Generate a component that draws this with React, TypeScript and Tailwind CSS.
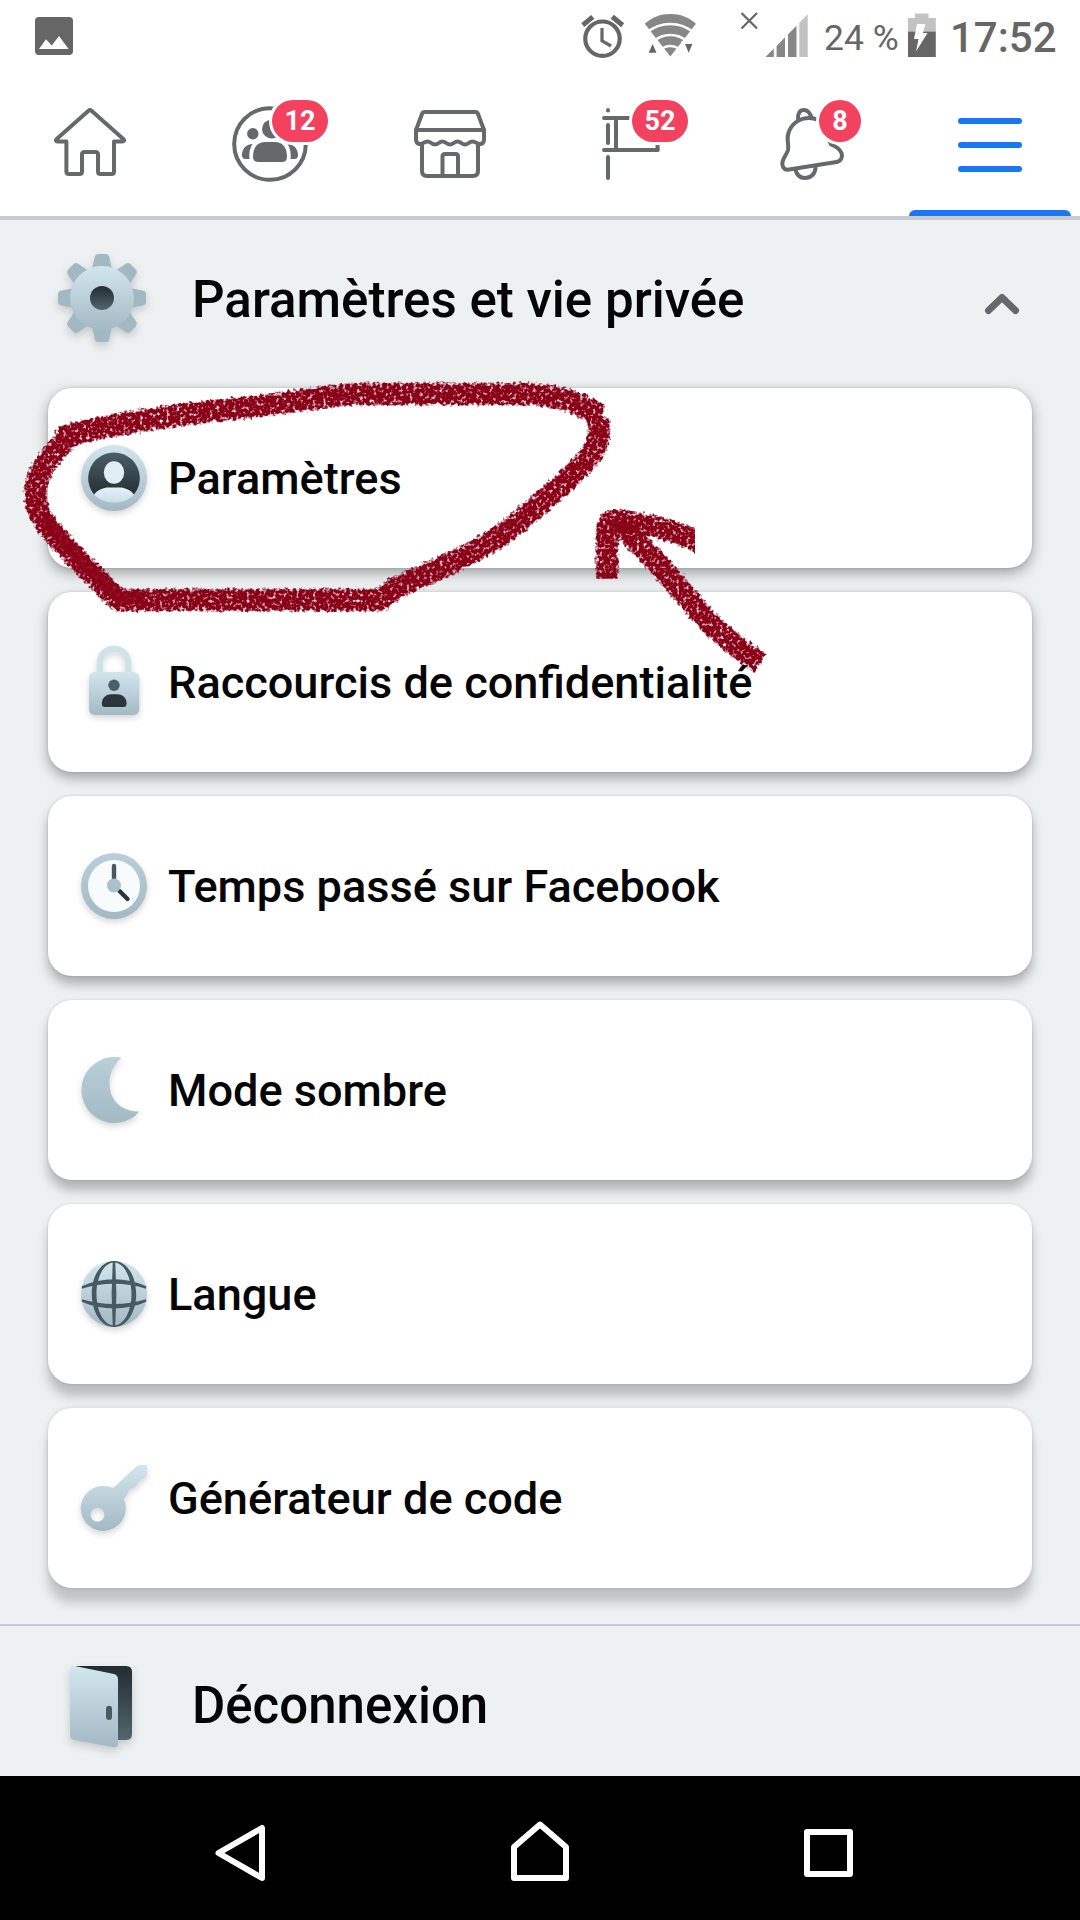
import type { ReactNode } from "react";
import { clsx } from "clsx";

interface NavTab {
    id: string;
    icon: ReactNode;
    badge?: string;
    badgeClass?: string;
    active?: boolean;
}

interface MenuItem {
    id: string;
    label: string;
    icon: ReactNode;
    shadow: string;
}

/* ---------- Status bar ---------- */

function StatusBar() {
    return (
        <div className="flex h-[72px] items-start bg-white text-[#666]">
            <svg className="ml-[35px] mt-[17px] h-[38px] w-[38px]" viewBox="0 0 38 38">
                <rect width="38" height="38" rx="4" fill="#666" />
                <path d="M4 32 11 22.3 16.8 28.6 24 19 33.6 32Z" fill="#fff" />
            </svg>

            {/* Alarm */}
            <svg className="ml-[508px] mt-3 h-12 w-[44px]" viewBox="581 12 44 48" fill="none" stroke="#666">
                <circle cx="602.5" cy="38.7" r="17.2" strokeWidth="4.2" />
                <path d="M602 28v12.8l9 5.2" strokeWidth="3.2" />
                <path d="M582.8 25.2 592.8 16.8M612.3 16.8 622.6 25.2" strokeWidth="5" />
            </svg>

            {/* Wifi */}
            <svg className="ml-[18px] mt-3 h-12 w-[56px]" viewBox="643 12 56 48">
                <path d="M670.3 56.5 644.8 23.7C652 17.2 660.5 14 670.3 14s18.5 3.2 25.7 9.7Z" fill="#878787" />
                <path
                    d="M647 32.6A36 36 0 0 1 693.6 32.6M654 41A25 25 0 0 1 686.6 41M661 49.5A14 14 0 0 1 679.6 49.5"
                    fill="none"
                    stroke="#fff"
                    strokeWidth="2.6"
                />
                <path d="M645 56 652.5 38.5 660 56ZM681 41H697L689 56Z" fill="#fff" />
                <path d="M648.7 52.7 652.6 44 656.5 52.7ZM685 44H692.4L688.7 52.7Z" fill="#666" />
            </svg>

            {/* Signal */}
            <svg className="ml-[41px] mt-3 h-12 w-[70px]" viewBox="740 12 70 48">
                <path d="M741.5 13 757 28.5M757 13 741.5 28.5" stroke="#666" strokeWidth="2.2" />
                <path d="M765.5 57 773.8 48.6V57ZM776.6 57V46L785 37.3V57ZM788 57V34.3L796.5 25.8V57Z" fill="#878787" />
                <path d="M799.3 57V22.8L807.7 14.3V57Z" fill="#c2c2c2" />
            </svg>

            <span className="ml-[14px] mt-[17px] w-[76px] whitespace-nowrap text-[35.5px] leading-[42px]">24 %</span>

            {/* Battery */}
            <svg className="ml-[8px] mt-3 h-12 w-[28px]" viewBox="908 12 28 48">
                <path d="M908 31.5V18h7v-4.5h13.5V18h7.3v13.5Z" fill="#c2c2c2" />
                <path d="M908 31.5h27.8V57H908Z" fill="#666" />
                <path d="M917 24h8.5l-2.5 9h4.5L916 51.5l2.5-12.5h-4.5Z" fill="#fff" />
            </svg>

            <span className="ml-[14px] mt-[13px] whitespace-nowrap text-[42px] font-medium leading-[50px]">17:52</span>
        </div>
    );
}

/* ---------- Tab bar ---------- */

const line = {
    fill: "none",
    stroke: "#65696c",
    strokeWidth: 4,
    strokeLinejoin: "round" as const,
    strokeLinecap: "round" as const,
};

const tabs: NavTab[] = [
    {
        id: "home",
        icon: (
            <svg className="h-[144px] w-[180px]" viewBox="0 72 180 144" {...line}>
                <path d="M88.5 110.8Q90 109.4 91.5 110.8L123.6 139.2Q125 141.3 122.6 141.5H114V171.5Q114 174 111.5 174H100.5Q98 174 98 171.5V154.5Q98 152 95.5 152H84.5Q82 152 82 154.5V171.5Q82 174 79.5 174H69Q66.4 174 66.4 171.5V141.5H57.6Q55 141.3 56.4 139.2Z" />
            </svg>
        ),
    },
    {
        id: "groups",
        badge: "12",
        badgeClass: "left-[92px] w-14",
        icon: (
            <svg className="h-[144px] w-[180px]" viewBox="180 72 180 144">
                <circle cx="270" cy="144" r="35.8" {...line} />
                <g fill="#65696c">
                    <circle cx="252.8" cy="133.8" r="5.7" />
                    <ellipse cx="272" cy="129" rx="10" ry="9.5" />
                    <path d="M253 156.5C253 147 258 142 265 142H275C282 142 287 147 287 156.5Q287 162 282 162H258Q253 162 253 156.5Z" />
                    <path d="M252.5 144C246 144 242 149 242 155Q242 159 245.5 159H249.5Q248.5 150 252.5 144Z" />
                    <path d="M287.5 144C294 144 298 149 298 155Q298 159 294.5 159H290.5Q291.5 150 287.5 144Z" />
                </g>
            </svg>
        ),
    },
    {
        id: "marketplace",
        icon: (
            <svg className="h-[144px] w-[180px]" viewBox="360 72 180 144" {...line}>
                <path d="M416 130 422 114Q422.6 112 424.8 112H475.2Q477.4 112 478 114L484 130Z" />
                <path d="M416 130V140Q416.5 144 420 144C424 144 424 141.5 427.5 141.5S431.5 144.5 435 144.5 439 141.5 442.5 141.5 446.5 144.5 450 144.5 454 141.5 457.5 141.5 461.5 144.5 465 144.5 469 141.5 472.5 141.5 476 144 480 144Q483.5 144 484 140V130" />
                <path d="M422 144V171Q422 176 427 176H473Q478 176 478 171V144M442.5 176V156.5Q442.5 154 445 154H455.5Q458 154 458 156.5V176" />
            </svg>
        ),
    },
    {
        id: "drafts",
        badge: "52",
        badgeClass: "left-[92px] w-14",
        icon: (
            <svg className="h-[144px] w-[180px]" viewBox="540 72 180 144" {...line}>
                <path d="M608 110V110.6M608 125V143M608 157V178M604 118H640M616 118V150M604 150H657.8L657 140" />
            </svg>
        ),
    },
    {
        id: "notifications",
        badge: "8",
        badgeClass: "left-[99px] w-[42px]",
        icon: (
            <svg className="h-[144px] w-[180px]" viewBox="720 72 180 144" {...line}>
                <path d="M798 119.5C797.5 113 800 110 804 110S810 113 811.5 117.5" />
                <path d="M818 120C809 115.5 797 118.5 791 127.5 784.5 137 789.5 144 788 150 786.5 155 782 159 782.3 164Q783 170.5 789 169.6L836.5 162C841 161.2 843 157 841.5 153 839.5 148.5 835 146 831 144.5L826 132" />
                <path d="M795.5 170C797 175.5 800.5 178 805 178 811 178 815.5 173.5 815.5 167.5" />
            </svg>
        ),
    },
    {
        id: "menu",
        active: true,
        icon: (
            <svg className="h-[144px] w-[180px]" viewBox="900 72 180 144" stroke="#1778f2" strokeWidth="6" strokeLinecap="round">
                <path d="M961 121H1019M961 145H1019M961 169H1019" />
            </svg>
        ),
    },
];

function TabBar() {
    return (
        <nav className="grid h-[148px] grid-cols-6 border-b-4 border-[#c7cbd1] bg-white">
            {tabs.map((tab) => (
                <div key={tab.id} className="relative h-[144px]">
                    {tab.icon}
                    {tab.badge && (
                        <span
                            className={clsx(
                                "absolute top-7 flex h-[42px] items-center justify-center rounded-full bg-[#f3425f] text-[27px] font-bold text-white ring-[3px] ring-white",
                                tab.badgeClass
                            )}
                        >
                            {tab.badge}
                        </span>
                    )}
                    {tab.active && <span className="absolute bottom-0 left-[9px] h-1.5 w-[162px] rounded-t-md bg-[#1778f2]" />}
                </div>
            ))}
        </nav>
    );
}

/* ---------- Menu icons ---------- */

function Gradients() {
    return (
        <svg className="absolute h-0 w-0">
            <defs>
                <linearGradient id="steel" x1="0" y1="0" x2="0" y2="1">
                    <stop offset="0" stopColor="#d2e6ee" />
                    <stop offset="1" stopColor="#a3b9c4" />
                </linearGradient>
                <linearGradient id="ring" x1="0" y1="0" x2="0" y2="1">
                    <stop offset="0" stopColor="#b9d0da" />
                    <stop offset="1" stopColor="#a3b9c4" />
                </linearGradient>
                <linearGradient id="dark" x1="0" y1="0" x2="0" y2="1">
                    <stop offset="0" stopColor="#4b5f67" />
                    <stop offset="1" stopColor="#262f35" />
                </linearGradient>
                <linearGradient id="hollow" x1="0" y1="0" x2="0" y2="1">
                    <stop offset="0" stopColor="#222c30" />
                    <stop offset="1" stopColor="#52666e" />
                </linearGradient>
                <linearGradient id="face" x1="0" y1="0" x2="0" y2="1">
                    <stop offset="0" stopColor="#e6f2f9" />
                    <stop offset="1" stopColor="#cadde6" />
                </linearGradient>
            </defs>
        </svg>
    );
}

const iconClass = "h-[80px] w-[80px] shrink-0 overflow-visible drop-shadow-[0_3px_3px_rgba(0,0,0,0.16)]";

const GearIcon = () => (
    <svg className="h-[100px] w-[100px] shrink-0 overflow-visible drop-shadow-[0_4px_4px_rgba(0,0,0,0.16)]" viewBox="-50 -50 100 100">
        {[0, 45, 90, 135, 180, 225, 270, 315].map((angle) => (
            <path
                key={angle}
                d="M-10 -28-7.2 -41.5Q-6.6 -44-4 -44H4Q6.6 -44 7.2 -41.5L10 -28Z"
                fill="#a2b8c2"
                transform={`rotate(${angle})`}
            />
        ))}
        <circle r="32" fill="url(#steel)" />
        <circle r="12" fill="url(#hollow)" />
    </svg>
);

const ProfileIcon = () => (
    <svg className={iconClass} viewBox="-40 -40 80 80">
        <circle r="33" fill="url(#steel)" />
        <path d="M-20 16.5A25.8 25.8 0 1 1 20 16.5Z" fill="url(#dark)" />
        <ellipse cy="-5.5" rx="10.2" ry="11.3" fill="#e0eef5" />
        <path d="M-20 16.5C-16 11.5-10 9.5-6 9.5H6C10 9.5 16 11.5 20 16.5 10 27.5-10 27.5-20 16.5Z" fill="url(#face)" />
    </svg>
);

const LockIcon = () => (
    <svg className={iconClass} viewBox="-40 -38 80 80">
        <path d="M-14.2 -8V-17A14.2 14.2 0 0 1 14.2 -17V-8" fill="none" stroke="#cde2ea" strokeWidth="6" />
        <rect x="-25" y="-8" width="50.3" height="43" rx="6" fill="url(#steel)" />
        <circle cy="5.3" r="5.7" fill="#4b5f67" />
        <path d="M-12.2 23.5C-12 17-7 14.3-3 14.3H3.5C7.5 14.3 12.6 17 12.6 23.5Q12.6 27 9.5 27H-9.2Q-12.2 27-12.2 23.5Z" fill="#2b363c" />
    </svg>
);

const ClockIcon = () => (
    <svg className={iconClass} viewBox="-40 -40 80 80">
        <circle r="33" fill="url(#ring)" />
        <circle r="26" fill="#f8fbfc" />
        <path d="M0 -20V-8" stroke="#475860" strokeWidth="4.4" strokeLinecap="round" />
        <path d="M5.5 5 13.5 13" stroke="#2b363c" strokeWidth="4.4" strokeLinecap="round" />
        <circle cy="-0.5" r="7" fill="#a9c1cd" />
    </svg>
);

const MoonIcon = () => (
    <svg className={iconClass} viewBox="-40 -40 80 80">
        <path d="M7.5 -32.2A33 33 0 1 0 25.5 21.5C8 21.5-4.5 11-4.5 -7-4.5 -17 0 -26 7.5 -32.2Z" fill="url(#ring)" />
    </svg>
);

const GlobeIcon = () => (
    <svg className={iconClass} viewBox="-40 -40 80 80">
        <circle r="33" fill="url(#steel)" />
        <g fill="#475a62">
            <path d="M-1.2 -33H1.2L2.4 0 1.2 33H-1.2L-2.4 0Z" />
            <path
                fillRule="evenodd"
                d="M0 -33C13 -33 22.2 -18 22.2 0S13 33 0 33-22.2 18-22.2 0-13 -33 0 -33ZM0 -31.5C-10 -31.5-17.5 -17-17.5 0S-10 31.5 0 31.5 17.5 17 17.5 0 10 -31.5 0 -31.5Z"
            />
            <path d="M-32.3 -7.8C-12 -17 12 -17 32.3 -7.8L32 -5.2C12 -12 -12 -12-32 -5.2Z" />
            <path d="M-32.3 7.8C-12 16.8 12 16.8 32.3 7.8L32 5.2C12 11.5-12 11.5-32 5.2Z" />
        </g>
    </svg>
);

const KeyIcon = () => (
    <svg className={iconClass} viewBox="-40 -40 80 80">
        <path
            fillRule="evenodd"
            fill="url(#steel)"
            d="M1 -11.5 22.5 -31.5Q24 -33 26 -33H31Q33 -33 33 -31V-24.5Q32 -18.5 26.5 -18.5 26 -18 23.5 -14Q22 -9.5 17 -9.5 14.5 -9 13.5 -4 12.5 -1 9.5 0L11 4.5A22.5 22.5 0 1 1-1 -9.9ZM-16.5 9.8A7 7 0 1 0-16.5 23.8 7 7 0 1 0-16.5 9.8Z"
        />
    </svg>
);

const DoorIcon = () => (
    <svg className="h-[100px] w-[100px] shrink-0 overflow-visible drop-shadow-[0_4px_4px_rgba(0,0,0,0.16)]" viewBox="52 1655 100 100">
        <path d="M76 1666H126Q132 1666 132 1672V1734Q132 1740 126 1740H76Z" fill="url(#hollow)" />
        <path d="M70 1671Q70 1665.5 76 1666.2L114 1674Q118 1675 118 1679.5V1743.5Q118 1748 113.5 1747.2L74 1740Q70 1739 70 1734.5Z" fill="url(#steel)" />
        <rect x="106" y="1705.7" width="6" height="14.3" rx="3" fill="#4b5b63" />
    </svg>
);

/* The shadow gets deeper the lower the card sits on the screen */
const items: MenuItem[] = [
    { id: "settings", label: "Paramètres", icon: <ProfileIcon />, shadow: "shadow-[0_5px_14px_rgba(0,0,0,0.34),0_0_3px_rgba(0,0,0,0.15)]" },
    { id: "privacy", label: "Raccourcis de confidentialité", icon: <LockIcon />, shadow: "shadow-[0_6px_13px_rgba(0,0,0,0.32),0_0_3px_rgba(0,0,0,0.15)]" },
    { id: "time", label: "Temps passé sur Facebook", icon: <ClockIcon />, shadow: "shadow-[0_8px_12px_rgba(0,0,0,0.28),0_0_3px_rgba(0,0,0,0.15)]" },
    { id: "dark", label: "Mode sombre", icon: <MoonIcon />, shadow: "shadow-[0_10px_11px_rgba(0,0,0,0.25),0_0_3px_rgba(0,0,0,0.15)]" },
    { id: "language", label: "Langue", icon: <GlobeIcon />, shadow: "shadow-[0_12px_11px_rgba(0,0,0,0.22),0_0_3px_rgba(0,0,0,0.15)]" },
    { id: "code", label: "Générateur de code", icon: <KeyIcon />, shadow: "shadow-[0_15px_11px_rgba(0,0,0,0.19),0_0_4px_rgba(0,0,0,0.15)]" },
];

function MenuCard({ label, icon, shadow }: MenuItem) {
    return (
        <div className={clsx("flex h-[180px] items-center rounded-3xl bg-white pl-[26px]", shadow)}>
            {icon}
            <span className="ml-[14px] mt-0.5 whitespace-nowrap text-[45.1px] font-medium">{label}</span>
        </div>
    );
}

/* ---------- Crayon annotation ---------- */

function Scribble() {
    return (
        <svg className="pointer-events-none absolute left-0 top-0 h-[700px] w-[800px]" viewBox="0 0 800 700">
            <defs>
                <filter id="crayon" filterUnits="userSpaceOnUse" x="0" y="360" width="800" height="340">
                    <feTurbulence type="fractalNoise" baseFrequency="0.3" numOctaves="2" seed="4" result="noise" />
                    <feGaussianBlur in="SourceAlpha" stdDeviation="2.8" result="soft" />
                    <feComposite in="soft" in2="noise" operator="arithmetic" k1="0" k2="0.5" k3="0.5" k4="0" />
                    <feComponentTransfer result="grain">
                        <feFuncA type="linear" slope="7" intercept="-4.1" />
                    </feComponentTransfer>
                    <feFlood floodColor="#8a0217" />
                    <feComposite in2="grain" operator="in" />
                </filter>
                {/* The two barbs of the arrow end in straight cuts */}
                <clipPath id="barbs">
                    <path d="M560 490H695V570L640 578.7H560Z" />
                </clipPath>
            </defs>
            <g fill="none" stroke="#8a0217" strokeWidth="26" strokeLinejoin="round">
                <g filter="url(#crayon)">
                    <path d="M57 438C110 424 170 415 241 408 300 402 330 394 365 394H528C560 396 580 402 602 417" />
                    <path d="M598 418C604 445 590 458 571 476 545 500 520 522 499 537 460 561 430 572 396 588L380 600H118L69 550C50 530 34 515 35 492 37 470 50 456 70 436" />
                    <path d="M614 519C640 545 660 565 690 601Q720 638 762 664" />
                </g>
                <g clipPath="url(#barbs)">
                    <path d="M607 590V532Q606 521 617 520L645 525Q672 529 708 546" filter="url(#crayon)" />
                </g>
            </g>
            {/* Spots where the crayon went over twice */}
            <g fill="none" stroke="#8a0217" strokeLinejoin="round" opacity="0.85">
                <path d="M44 516C62 542 90 570 120 598H142" strokeWidth="13" />
                <path d="M614 526 632 529" strokeWidth="11" />
            </g>
        </svg>
    );
}

/* ---------- Screen ---------- */

export default function App() {
    return (
        <div className="relative flex h-[1920px] w-[1080px] flex-col overflow-hidden bg-[#edf1f2] font-['Roboto',sans-serif] text-[#050505]">
            <Gradients />
            <StatusBar />
            <TabBar />

            <main className="flex flex-1 flex-col">
                <div className="flex h-[168px] items-center pb-3 pl-[52px]">
                    <GearIcon />
                    <h1 className="ml-10 mt-[5px] whitespace-nowrap text-[51.1px] font-medium">Paramètres et vie privée</h1>
                    <svg className="ml-auto mr-[58px] mt-3 h-6 w-10" viewBox="982 292 40 24" fill="none">
                        <path d="M988.5 310.5 1002 297.5 1015.5 310.5" stroke="#65696c" strokeWidth="7" strokeLinecap="round" strokeLinejoin="round" />
                    </svg>
                </div>

                <div className="flex flex-col gap-6 px-12">
                    {items.map((item) => (
                        <MenuCard key={item.id} {...item} />
                    ))}
                </div>

                <div className="mt-9 flex flex-1 items-center border-t-2 border-[#c7cbd3] pb-[1px] pl-[52px] pt-[9px]">
                    <DoorIcon />
                    <h2 className="ml-10 mt-0.5 text-[51px] font-medium">Déconnexion</h2>
                </div>
            </main>

            {/* Android navigation */}
            <footer className="flex h-36 items-center bg-black">
                <svg className="ml-[210px] h-[70px] w-[60px]" viewBox="210 1813 60 70" fill="none" stroke="#fff" strokeWidth="6" strokeLinejoin="round">
                    <path d="M218.5 1853 262 1828V1878Z" />
                </svg>
                <svg className="ml-[238px] h-[70px] w-[64px]" viewBox="508 1813 64 70" fill="none" stroke="#fff" strokeWidth="6" strokeLinejoin="round">
                    <path d="M514 1847 540 1824.5 566 1847V1878H514Z" />
                </svg>
                <svg className="ml-[230px] h-[70px] w-[54px]" viewBox="802 1813 54 70" fill="none" stroke="#fff" strokeWidth="6" strokeLinejoin="round">
                    <path d="M807 1832H850V1874H807Z" />
                </svg>
            </footer>

            <Scribble />
        </div>
    );
}
